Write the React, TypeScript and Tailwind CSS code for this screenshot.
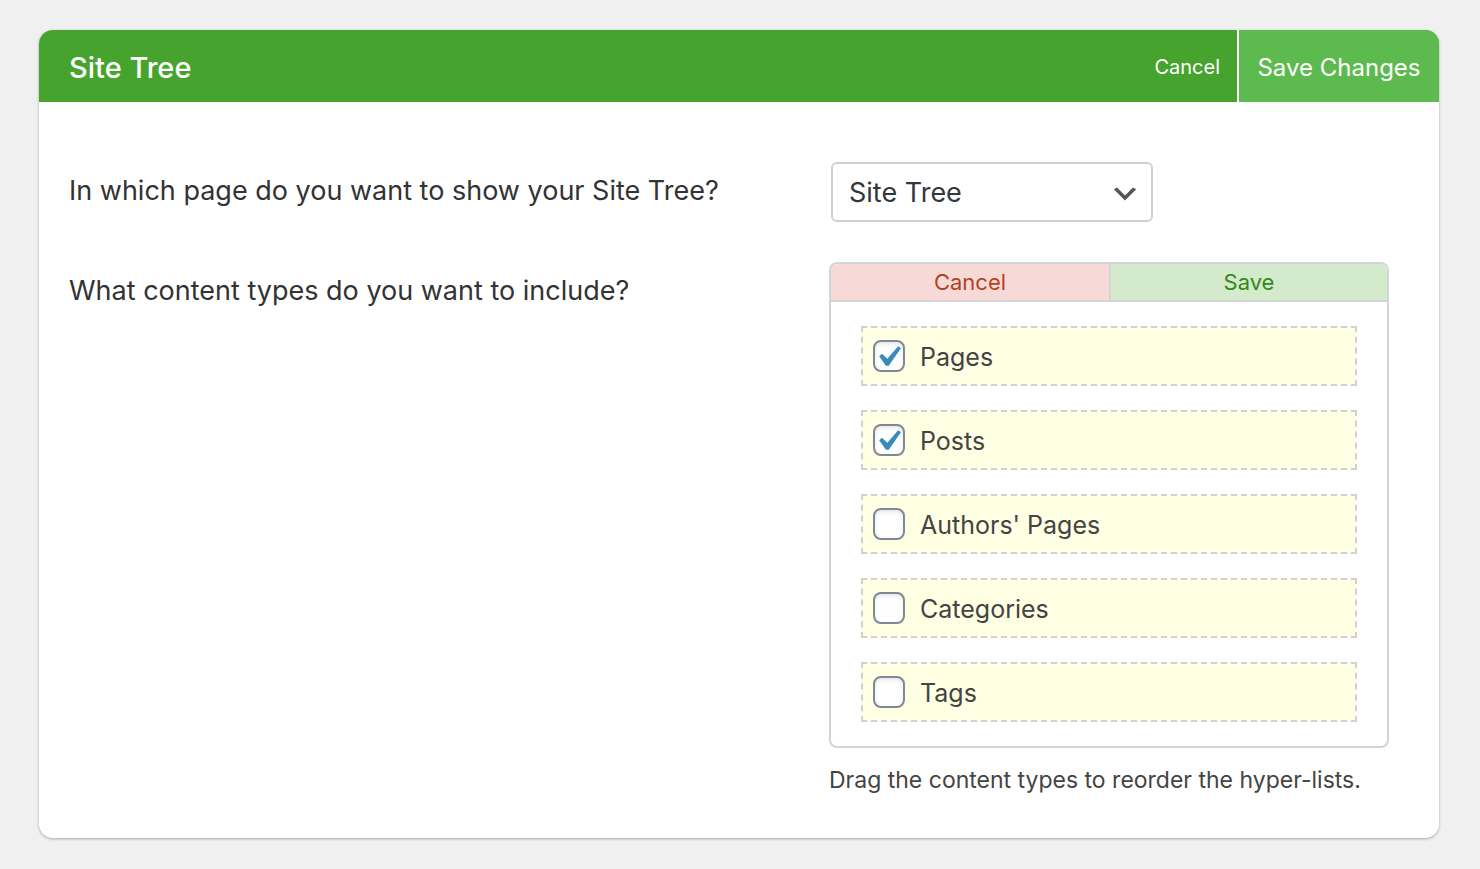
import { useState } from "react";

type ContentType = { id: string; label: string; checked: boolean };

const initialTypes: ContentType[] = [
  { id: "pages", label: "Pages", checked: true },
  { id: "posts", label: "Posts", checked: true },
  { id: "authors", label: "Authors' Pages", checked: false },
  { id: "categories", label: "Categories", checked: false },
  { id: "tags", label: "Tags", checked: false },
];

function Header() {
  return (
    <header className="flex h-18 items-stretch bg-[#46a42e] pl-[30px] text-white">
      <h1 className="flex flex-1 items-center pt-1 text-[29px] font-medium">Site Tree</h1>
      <button type="button" className="px-[17px] pt-0.5 text-xl">
        Cancel
      </button>
      <button type="submit" className="w-[202px] border-l-2 border-white bg-[#5cba4e] pt-1 text-2xl">
        Save Changes
      </button>
    </header>
  );
}

function PageSelect() {
  return (
    <div className="relative ml-0.5 w-[322px]">
      <select
        id="site-tree-page"
        className="h-15 w-full appearance-none rounded-md border-2 border-[#cdd0d5] bg-white pt-0.5 pr-12 pl-4 text-[27px] text-[#32373c]"
      >
        <option>Site Tree</option>
      </select>
      <svg
        viewBox="0 0 20 20"
        className="pointer-events-none absolute top-4 right-3 size-8 fill-[#555]"
        aria-hidden="true"
      >
        <path d="M5 6l5 5 5-5 2 1-7 7-7-7 2-1z" />
      </svg>
    </div>
  );
}

function TypeRow({ item, onToggle }: { item: ContentType; onToggle: () => void }) {
  return (
    <li>
      <label
        htmlFor={item.id}
        className="flex h-15 items-center gap-[15px] border-2 border-dashed border-[#cdd0d5] bg-[#ffffe3] pl-2.5 text-[25px] text-[#444]"
      >
        <span className="relative flex size-8 shrink-0">
          <input
            id={item.id}
            type="checkbox"
            checked={item.checked}
            onChange={onToggle}
            className="peer size-8 appearance-none rounded-lg border-2 border-[#7e8993] bg-white shadow-[inset_0_2px_4px_rgba(0,0,0,0.1)]"
          />
          <svg
            viewBox="0 0 20 20"
            className="pointer-events-none invisible absolute -top-1 -left-1.5 size-[42px] max-w-none fill-[#378bbd] peer-checked:visible"
            aria-hidden="true"
          >
            <path d="M14.83 4.89l1.34.94-5.81 8.38H9.02L5.78 9.67l1.34-1.25 2.57 2.4z" />
          </svg>
        </span>
        <span className="pt-[3px]">{item.label}</span>
      </label>
    </li>
  );
}

export default function App() {
  const [types, setTypes] = useState(initialTypes);
  const toggle = (id: string) =>
    setTypes((list) => list.map((t) => (t.id === id ? { ...t, checked: !t.checked } : t)));

  return (
    <main className="min-h-screen bg-[#f0f0f0] py-[30px] pr-[41px] pl-[39px] font-['Inter',sans-serif]">
      <form
        onSubmit={(e) => e.preventDefault()}
        className="overflow-hidden rounded-[14px] bg-white shadow-[0_1px_3px_rgba(0,0,0,0.3)]"
      >
        <Header />
        <div className="grid grid-cols-[minmax(0,1fr)_560px] gap-y-10 pt-15 pr-[50px] pb-[42px] pl-[30px] text-[#333]">
          <label htmlFor="site-tree-page" className="pt-[9px] text-[27px] leading-10">
            In which page do you want to show your Site Tree?
          </label>
          <PageSelect />

          <h2 id="types-title" className="pt-[9px] text-[27px] leading-10">
            What content types do you want to include?
          </h2>
          <div role="group" aria-labelledby="types-title">
            <div className="overflow-hidden rounded-lg border-2 border-[#d1d5d9]">
              <div className="grid h-[38px] grid-cols-2 border-b-2 border-[#d1d5d9] text-[22px]">
                <button type="button" className="bg-[#f7d9d8] text-[#b2431f]">
                  Cancel
                </button>
                <button type="button" className="border-l-2 border-[#d1d5d9] bg-[#d4ebcb] text-[#328820]">
                  Save
                </button>
              </div>
              <ul className="flex flex-col gap-6 px-[30px] py-6">
                {types.map((t) => (
                  <TypeRow key={t.id} item={t} onToggle={() => toggle(t.id)} />
                ))}
              </ul>
            </div>
            <p className="pt-4 text-[23px] leading-8 whitespace-nowrap text-[#444]">
              Drag the content types to reorder the hyper-lists.
            </p>
          </div>
        </div>
      </form>
    </main>
  );
}
